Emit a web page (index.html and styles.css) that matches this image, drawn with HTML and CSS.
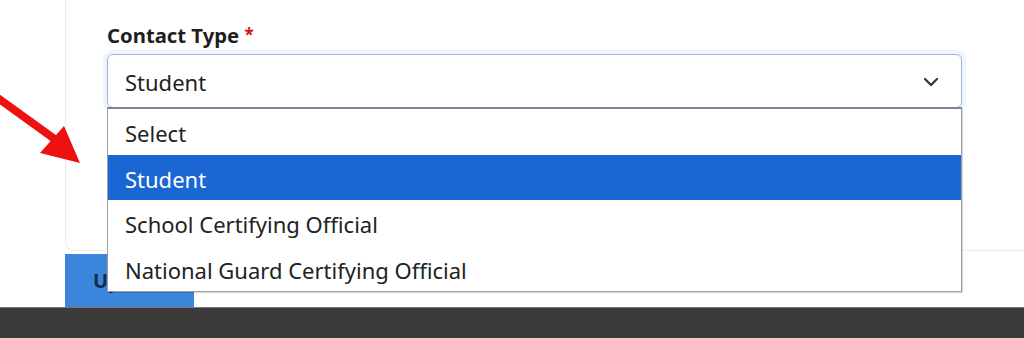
FILE: index.html
```html
<!DOCTYPE html>
<html>
	<head>
		<meta charset="UTF-8">
		<title>Contact Type</title>
		<link rel="stylesheet" href="styles.css">
	</head>
	<body>
		<div class="page">
			<div class="card">
				<div class="field">
					<label>Contact Type <span class="req">*</span></label>
					<div class="select">
						<span>Student</span>
						<svg class="chevron" width="16" height="10" viewBox="0 0 16 10">
							<path d="M2 2 L8 8 L14 2" fill="none" stroke="#333" stroke-width="2.2" stroke-linecap="round" stroke-linejoin="round"/>
						</svg>
					</div>
				</div>
			</div>
			<div class="btn">Update</div>

			<ul class="menu">
				<li>Select</li>
				<li class="on">Student</li>
				<li>School Certifying Official</li>
				<li>National Guard Certifying Official</li>
			</ul>

			<svg class="arrow" width="90" height="170" viewBox="0 0 90 170">
				<path d="M-5 96 L56 140" stroke="#ee1111" stroke-width="8" fill="none"/>
				<polygon points="80,163 64,126 40,153" fill="#ee1111"/>
			</svg>
		</div>
		<div class="footer"></div>
	</body>
</html>
```

FILE: styles.css
```css
*{
	margin: 0;
	padding: 0;
	box-sizing: border-box;
}
ul,li{
	list-style-type: none;
}
body{
	font-family: "Noto Sans", "Open Sans", sans-serif;
	color: #222;
	background: #fff;
}
.page{
	position: relative;
	height: 307px;
	overflow: hidden;
}
.card{
	margin-left: 65px;
	height: 251px;
	border-left: 1px solid #ececec;
	border-bottom: 1px solid #ececec;
	border-radius: 0 0 0 9px;
	padding: 21px 0 0 41px;
}
.field label{
	display: block;
	font-size: 20.3px;
	font-weight: bold;
	color: #1e1e1e;
	height: 33px;
}
.req{
	color: #d3111e;
	font-size: 17px;
	vertical-align: 2px;
}
.select{
	width: 855px;
	height: 54px;
	border: 1px solid #9ab6e0;
	border-radius: 6px;
	box-shadow: 0 0 0 4px rgba(120,160,230,0.12);
	display: flex;
	align-items: center;
	justify-content: space-between;
	padding: 2px 22px 0 17px;
	font-size: 22px;
	color: #222;
}
.btn{
	margin: 3px 0 0 65px;
	width: 129px;
	height: 53px;
	background: #3b86dc;
	color: #1a2a44;
	font-weight: bold;
	font-size: 20px;
	line-height: 53px;
	padding-left: 28px;
}
.menu{
	position: absolute;
	left: 107px;
	top: 107px;
	width: 855px;
	border: 1px solid #a0a0a0;
	border-top: 2px solid #7a8294;
	background: #fff;
	box-shadow: 1px 1px 1px rgba(0,0,0,0.15);
}
.menu li{
	height: 45.5px;
	line-height: 48px;
	padding-left: 17px;
	font-size: 22px;
	color: #222;
}
.menu li.on{
	background: #1a66d2;
	color: #fff;
}
.arrow{
	position: absolute;
	left: 0;
	top: 0;
}
.footer{
	height: 31px;
	background: #3a3a3a;
	border-top: 1px solid #777;
}
```
